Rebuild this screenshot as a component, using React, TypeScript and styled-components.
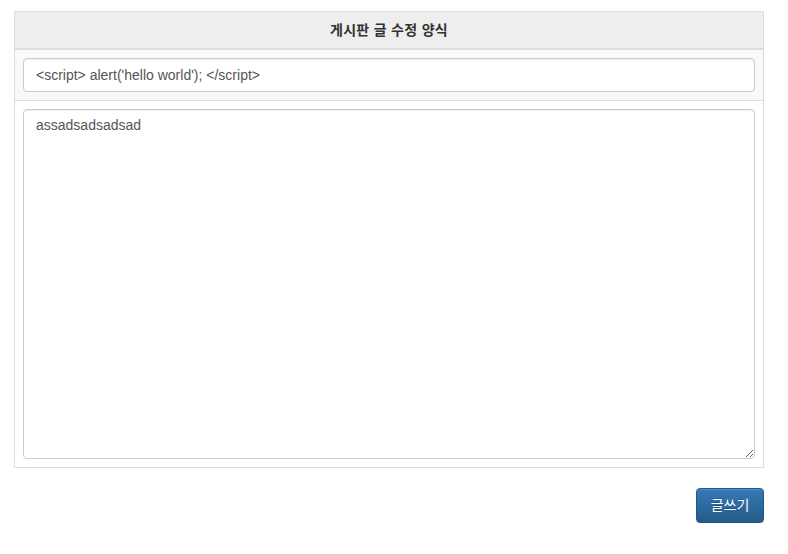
import styled, { createGlobalStyle } from "styled-components";

const GlobalStyle = createGlobalStyle`
  * { box-sizing: border-box; }
  body {
    margin: 0;
    background: #fff;
    color: #333;
    font-family: "Liberation Sans", "Noto Sans CJK KR", Arial, sans-serif;
    font-size: 14px;
    line-height: 1.42857;
  }
`

const Container = styled.div`
  width: 750px;
  margin: 11px 0 0 14px;
`
const Form = styled.form`
  display: flex;
  flex-direction: column;
`
const Table = styled.table`
  width: 100%;
  border-collapse: collapse;
  border-spacing: 0;
  border: 1px solid #ddd;
  margin-bottom: 20px;
`
const HeadCell = styled.th`
  background: #eee;
  border: 1px solid #ddd;
  border-bottom-width: 2px;
  padding: 8px;
  line-height: 20px;
  text-align: center;
  font-weight: bold;
  color: #333;
  letter-spacing: 0.3px;
`
const Row = styled.tr<{ striped?: boolean }>`
  background: ${props => (props.striped ? "#f9f9f9" : "#fff")};
`
const Cell = styled.td`
  border: 1px solid #ddd;
  padding: 8px;
  line-height: 20px;
  vertical-align: top;
`
const Field = `
  display: block;
  width: 100%;
  padding: 6px 12px;
  font-family: "Liberation Sans", "Noto Sans CJK KR", Arial, sans-serif;
  font-size: 14px;
  line-height: 1.42857;
  color: #555;
  background: #fff;
  border: 1px solid #ccc;
  border-radius: 4px;
  box-shadow: inset 0 1px 1px rgba(0, 0, 0, 0.075);
  outline: none;
`
const TitleInput = styled.input`
  ${Field}
  height: 34px;
`
const ContentArea = styled.textarea`
  ${Field}
  height: 350px;
  resize: vertical;
`
const Actions = styled.div`
  display: flex;
  justify-content: flex-end;
`
const SubmitButton = styled.button`
  min-width: 68px;
  padding: 6px 12px;
  font-family: "Liberation Sans", "Noto Sans CJK KR", Arial, sans-serif;
  font-size: 14px;
  line-height: 1.42857;
  height: 35px;
  color: #fff;
  border: 1px solid #245580;
  border-radius: 4px;
  background-image: linear-gradient(to bottom, #337ab7 0, #265a88 100%);
  text-shadow: 0 -1px 0 rgba(0, 0, 0, 0.2);
  box-shadow: inset 0 1px 0 rgba(255, 255, 255, 0.15), 0 1px 1px rgba(0, 0, 0, 0.075);
  cursor: pointer;
`

function App() {
  return (
    <>
      <GlobalStyle />
      <Container>
        <Form onSubmit={e => e.preventDefault()}>
          <Table>
            <thead>
              <tr>
                <HeadCell colSpan={2}>게시판 글 수정 양식</HeadCell>
              </tr>
            </thead>
            <tbody>
              <Row striped>
                <Cell>
                  <TitleInput
                    type="text"
                    defaultValue="<script> alert('hello world'); </script>"
                  />
                </Cell>
              </Row>
              <Row>
                <Cell>
                  <ContentArea defaultValue="assadsadsadsad" />
                </Cell>
              </Row>
            </tbody>
          </Table>
          <Actions>
            <SubmitButton type="submit">글쓰기</SubmitButton>
          </Actions>
        </Form>
      </Container>
    </>
  )
}

export default App
